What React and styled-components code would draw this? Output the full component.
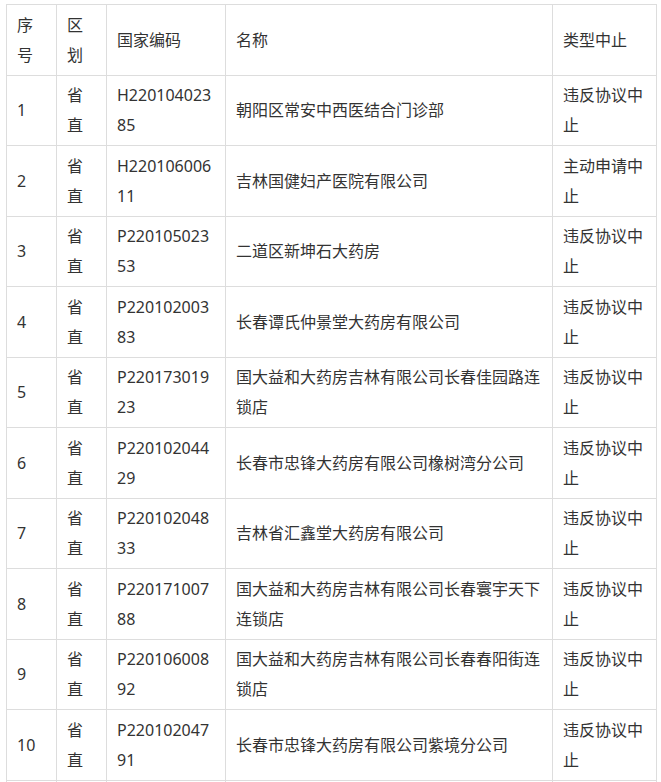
import React from 'react';
import styled, { createGlobalStyle } from 'styled-components';

const GlobalStyle = createGlobalStyle`
  html, body {
    margin: 0;
    padding: 0;
    background: #fff;
  }
  body {
    font-family: "Noto Sans", "Noto Sans CJK SC", sans-serif;
    color: #333;
  }
`;

const Page = styled.div`
  padding: 4px 0 0 6px;
  overflow: hidden;
  height: 782px;
  box-sizing: border-box;
`;

const Table = styled.table`
  width: 651px;
  table-layout: fixed;
  border-collapse: collapse;
  font-size: 16px;
  line-height: 30px;
`;

const Col = styled.col`
  width: ${(p) => p.$w}px;
`;

const HeadCell = styled.th`
  border: 1px solid #ddd;
  padding: 4.75px 10px;
  text-align: left;
  vertical-align: middle;
  font-weight: normal;
  word-break: break-all;
`;

const Cell = styled.td`
  border: 1px solid #ddd;
  padding: 4.75px 10px;
  text-align: left;
  vertical-align: middle;
  word-break: break-all;
  height: 60px;
`;

const columns = [50, 50, 119, 327, 104];

const rows = [
  ['1', 'H22010402385', '朝阳区常安中西医结合门诊部', '违反协议中止'],
  ['2', 'H22010600611', '吉林国健妇产医院有限公司', '主动申请中止'],
  ['3', 'P22010502353', '二道区新坤石大药房', '违反协议中止'],
  ['4', 'P22010200383', '长春谭氏仲景堂大药房有限公司', '违反协议中止'],
  ['5', 'P22017301923', '国大益和大药房吉林有限公司长春佳园路连锁店', '违反协议中止'],
  ['6', 'P22010204429', '长春市忠锋大药房有限公司橡树湾分公司', '违反协议中止'],
  ['7', 'P22010204833', '吉林省汇鑫堂大药房有限公司', '违反协议中止'],
  ['8', 'P22017100788', '国大益和大药房吉林有限公司长春寰宇天下连锁店', '违反协议中止'],
  ['9', 'P22010600892', '国大益和大药房吉林有限公司长春春阳街连锁店', '违反协议中止'],
  ['10', 'P22010204791', '长春市忠锋大药房有限公司紫境分公司', '违反协议中止'],
];

const App = () => (
  <Page>
    <GlobalStyle />
    <Table>
      <colgroup>
        {columns.map((w, i) => (
          <Col key={i} $w={w} />
        ))}
      </colgroup>
      <thead>
        <tr>
          <HeadCell>序号</HeadCell>
          <HeadCell>区划</HeadCell>
          <HeadCell>国家编码</HeadCell>
          <HeadCell>名称</HeadCell>
          <HeadCell>类型中止</HeadCell>
        </tr>
      </thead>
      <tbody>
        {rows.map(([no, code, name, type]) => (
          <tr key={no}>
            <Cell>{no}</Cell>
            <Cell>省直</Cell>
            <Cell>{code}</Cell>
            <Cell>{name}</Cell>
            <Cell>{type}</Cell>
          </tr>
        ))}
        <tr>
          <Cell />
          <Cell />
          <Cell />
          <Cell />
          <Cell />
        </tr>
      </tbody>
    </Table>
  </Page>
);

export default App;
